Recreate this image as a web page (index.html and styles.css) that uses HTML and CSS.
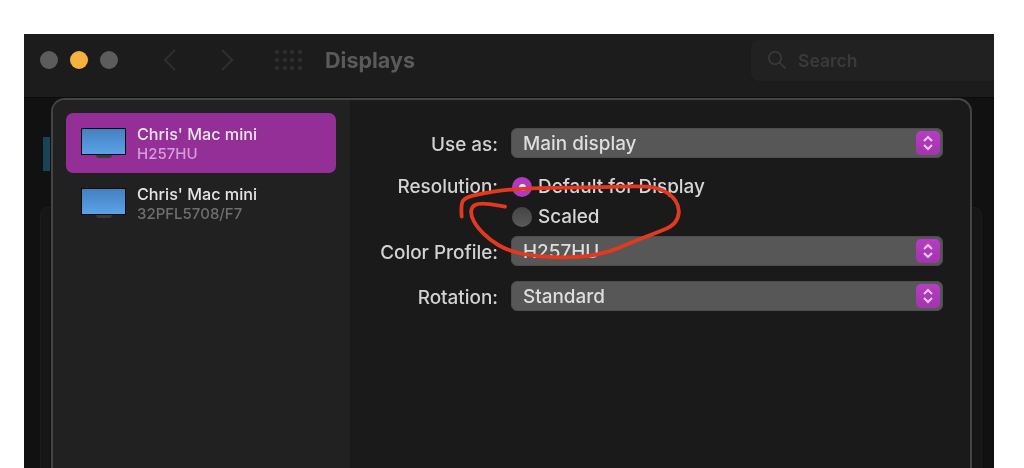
FILE: index.html
```html
<!DOCTYPE html>
<html lang="en">
<head>
<meta charset="utf-8">
<title>Displays</title>
<link rel="stylesheet" href="styles.css">
</head>
<body>
<div class="window">
  <header class="titlebar">
    <div class="lights">
      <span class="light"></span>
      <span class="light light-min"></span>
      <span class="light"></span>
    </div>
    <svg class="chev chev-back" width="14" height="24" viewBox="0 0 14 24"><path d="M12 2 2 12l10 10"/></svg>
    <svg class="chev chev-fwd" width="14" height="24" viewBox="0 0 14 24"><path d="M2 2l10 10L2 22"/></svg>
    <div class="gridicon">
      <i></i><i></i><i></i><i></i><i></i><i></i><i></i><i></i><i></i><i></i><i></i><i></i>
    </div>
    <h1 class="title">Displays</h1>
    <div class="search">
      <svg width="20" height="20" viewBox="0 0 20 20"><circle cx="8" cy="8" r="6.2"/><path d="M12.5 12.5 18.5 18.5"/></svg>
      <span>Search</span>
    </div>
  </header>
  <div class="body">
    <span class="under under-teal"></span>
    <span class="under under-left"></span>
    <span class="under under-right"></span>
    <section class="sheet">
      <aside class="sidebar">
        <div class="device device-selected">
          <div class="monitor"><div class="screen"></div><div class="stand"></div></div>
          <div class="device-text"><div class="device-name">Chris' Mac mini</div><div class="device-sub">H257HU</div></div>
        </div>
        <div class="device">
          <div class="monitor"><div class="screen"></div><div class="stand"></div></div>
          <div class="device-text"><div class="device-name">Chris' Mac mini</div><div class="device-sub">32PFL5708/F7</div></div>
        </div>
      </aside>
      <main class="panel">
        <div class="form">
          <label class="lbl row-use">Use as:</label>
          <div class="select row-use"><span class="select-value">Main display</span><span class="stepper"><svg width="12" height="18" viewBox="0 0 12 18"><path d="M2 7 6 3l4 4M2 11l4 4 4-4"/></svg></span></div>
          <label class="lbl lbl-res row-res">Resolution:</label>
          <div class="radios row-res">
            <div class="radio-row"><span class="radio radio-on"></span><span>Default for Display</span></div>
            <div class="radio-row"><span class="radio"></span><span>Scaled</span></div>
          </div>
          <label class="lbl row-color">Color Profile:</label>
          <div class="select row-color"><span class="select-value">H257HU</span><span class="stepper"><svg width="12" height="18" viewBox="0 0 12 18"><path d="M2 7 6 3l4 4M2 11l4 4 4-4"/></svg></span></div>
          <label class="lbl row-rot">Rotation:</label>
          <div class="select row-rot"><span class="select-value">Standard</span><span class="stepper"><svg width="12" height="18" viewBox="0 0 12 18"><path d="M2 7 6 3l4 4M2 11l4 4 4-4"/></svg></span></div>
        </div>
      </main>
    </section>
  </div>
</div>
<svg class="scribble" width="1024" height="468" viewBox="0 0 1024 468"><path d="M461.7 216.700Q460.700 205 462.800 201.100Q465 197.300 474 195.300Q483.300 193.300 493.300 191.600Q503.300 190 516.600 189.100Q530 188.300 550 187.800Q570 187.300 586.600 187.300Q603.300 187.300 620 186.600Q636.700 186 646.700 186.600Q656.700 187.300 664.200 191.100Q671.700 195 675.500 200.800Q679.300 206.700 678.800 212.500Q678.300 218.300 675 222.500Q671.700 226.700 662.500 230.300Q653.300 234 643.300 237.800Q633.300 241.700 621.600 246.700Q610 251.700 598.300 254.200Q586.700 256.700 571.700 257.200Q556.700 257.700 541.700 256.300Q526.700 255 516.700 252.500Q506.700 250 498.300 245Q490 240 483.300 233.300Q476.700 226.700 473.700 220.800Q470.700 215 471.200 210.800Q471.700 206.700 475 205Q478.300 203.300 485.800 203.800Q493.300 204.300 505 206.700"/></svg>
</body>
</html>
```
FILE: styles.css
```css
* { box-sizing: border-box; }
html, body { margin: 0; height: 468px; overflow: hidden; background: #fff; }
body {
  padding: 34px 30px 0 24px;
  font-family: Inter, "Liberation Sans", sans-serif;
  color: #d6d6d6;
  position: relative;
}
.window {
  height: 434px;
  background: #111;
  display: flex;
  flex-direction: column;
  overflow: hidden;
  filter: blur(0.6px);
}
.titlebar {
  height: 63px;
  flex: none;
  background: #1c1c1c;
  display: flex;
  align-items: center;
  padding: 0 0 11px 16px;
}
.lights { display: flex; gap: 12px; }
.light { width: 18px; height: 18px; border-radius: 50%; background: #5c5c5c; }
.light-min { background: #f4b33e; }
.chev { fill: none; stroke: #2e2e2e; stroke-width: 2.400; flex: none; }
.chev-back { margin-left: 45px; }
.chev-fwd { margin-left: 43px; }
.gridicon {
  margin-left: 41px;
  display: grid;
  grid-template-columns: repeat(4, 4px);
  grid-auto-rows: 4px;
  gap: 4px 3.700px;
}
.gridicon i { background: #2f2f2f; border-radius: 1.500px; }
.title { margin: 0 0 0 23px; font-size: 21.500px; font-weight: 700; color: #5a5a5a; }
.search {
  margin-left: auto;
  width: 243px;
  height: 41px;
  background: #212121;
  border-radius: 8px 0 0 8px;
  display: flex;
  align-items: center;
  gap: 11px;
  padding-left: 16px;
  font-size: 17.500px;
  font-weight: 600;
  color: #3a3a3a;
}
.search svg { fill: none; stroke: #3a3a3a; stroke-width: 1.600; }
.body {
  flex: 1;
  position: relative;
  padding: 0 22px 0 27px;
  border-top: 1px solid #0b0b0b;
  min-height: 0;
}
.under { position: absolute; }
.under-teal { left: 19px; top: 39px; width: 7px; height: 34px; background: #164655; }
.under-left { left: 16px; top: 109px; width: 10px; bottom: 0; border: 1px solid #1b1b1b; border-right: 0; border-bottom: 0; border-radius: 8px 0 0 0; background: #161616; }
.under-right { right: 12px; top: 109px; width: 10px; bottom: 0; border: 1px solid #1b1b1b; border-left: 0; border-bottom: 0; border-radius: 0 8px 0 0; background: #161616; }
.sheet {
  position: relative;
  height: 100%;
  display: flex;
  background: #1a1a1a;
  border: 2px solid #444;
  border-bottom: 0;
  border-radius: 14px 14px 0 0;
  overflow: hidden;
}
.sidebar {
  width: 297px;
  flex: none;
  background: #212121;
  padding: 13px 14px 13px 13px;
}
.device {
  height: 60px;
  display: flex;
  align-items: center;
  gap: 11px;
  padding-left: 15px;
  border-radius: 7px;
}
.device-selected { background: #932f96; }
.monitor { width: 45px; flex: none; }
.screen {
  height: 27px;
  background: linear-gradient(#4480bf, #5ba2e8);
  border: 1px solid #0d0d0d;
}
.stand {
  width: 16px;
  height: 3px;
  margin: 0 auto;
  background: #3a3a3a;
  border-radius: 0 0 8px 8px;
}
.device-text { padding-top: 2px; }
.device-name { font-size: 16.200px; font-weight: 500; line-height: 20px; color: #e4e4e4; }
.device-sub { font-size: 15px; font-weight: 500; line-height: 20px; color: #6f6f6f; }
.device-selected .device-sub { color: #d49fd8; }
.device-selected .device-name { color: #f0e4f1; }
.panel { flex: 1; padding: 28px 27px 0 0; }
.form {
  display: grid;
  grid-template-columns: 148px 1fr;
  column-gap: 13px;
  font-size: 18.900px;
  font-weight: 500;
  line-height: 30px;
}
.lbl { text-align: right; color: #d2d2d2; height: 30px; line-height: 33px; }
.lbl-res { line-height: 30px; }
.row-res { margin-top: 14px; }
.row-color { margin-top: 4px; }
.row-rot { margin-top: 15px; }
.select {
  height: 30px;
  background: #575757;
  border: 1px solid #4d4d4d;
  border-radius: 6px;
  display: flex;
  align-items: center;
  justify-content: space-between;
  padding: 0 2px 0 11px;
  color: #dedede;
}
.select-value { padding-top: 2px; }
.stepper {
  width: 24px;
  height: 24px;
  border-radius: 5px;
  background: linear-gradient(#b53dc2, #a334ae);
  display: flex;
  align-items: center;
  justify-content: center;
}
.stepper svg { fill: none; stroke: #f0c8f2; stroke-width: 2; }
.radios { display: flex; flex-direction: column; }
.radio-row { height: 30px; display: flex; align-items: center; gap: 6px; color: #d6d6d6; }
.radio { width: 20px; height: 20px; border-radius: 50%; background: linear-gradient(#444, #5a5a5a); flex: none; margin-left: 1px; }
.radio-on { background: #b03bbf; display: flex; align-items: center; justify-content: center; }
.radio-on::after { content: ""; width: 7px; height: 7px; border-radius: 50%; background: #f2e4f4; }
.scribble { position: absolute; left: 0; top: 0; pointer-events: none; filter: blur(0.4px); }
.scribble path { fill: none; stroke: #e4391f; stroke-width: 3.800; stroke-linecap: round; stroke-linejoin: round; }
```
